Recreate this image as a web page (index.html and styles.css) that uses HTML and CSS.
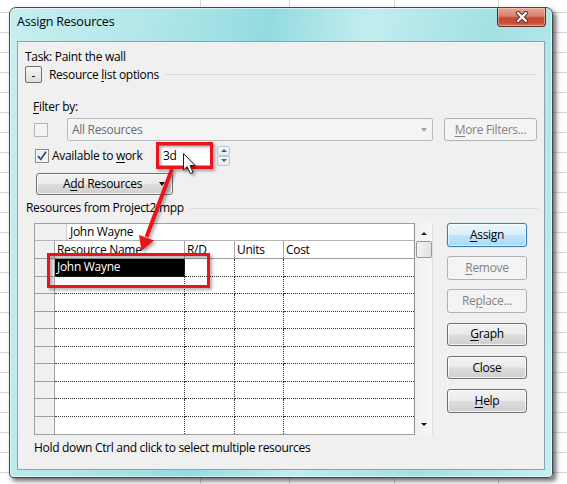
FILE: index.html
```html
<!DOCTYPE html>
<html>
<head>
<meta charset="utf-8">
<title>Assign Resources</title>
<link rel="stylesheet" href="styles.css">
</head>
<body>
<div class="window">
  <div class="titlebar">
    <span class="title">Assign Resources</span>
    <div class="close">
      <svg width="14" height="12" viewBox="0 0 14 12">
        <path d="M3 2 L11 10 M11 2 L3 10" stroke="#5a2a22" stroke-width="4.2" stroke-linecap="round"/>
        <path d="M3 2 L11 10 M11 2 L3 10" stroke="#ffffff" stroke-width="2.4" stroke-linecap="round"/>
      </svg>
    </div>
  </div>
  <div class="client">
    <div class="task">Task: Paint the wall</div>
    <div class="options-row">
      <span class="collapse"><span class="minus"></span></span>
      <span class="opt-label">Resource <u>l</u>ist options</span>
      <span class="rule"></span>
    </div>
    <div class="filter-label"><u>F</u>ilter by:</div>
    <div class="filter-row">
      <span class="check disabled"></span>
      <div class="combo"><span class="combo-text">All Resources</span><span class="combo-btn"><span class="tri-down gray"></span></span></div>
      <div class="btn disabled more"><span><u>M</u>ore Filters...</span></div>
    </div>
    <div class="avail-row">
      <span class="check"><svg width="12" height="12" viewBox="0 0 12 12"><path d="M2 6.2 L4.8 9.4 L10 1.8" fill="none" stroke="#344a85" stroke-width="1.8"/></svg></span>
      <span class="avail-label">Available to <u>w</u>ork</span>
      <div class="days">3d</div>
      <div class="spin"><span class="spin-btn"><span class="tri-up"></span></span><span class="spin-btn"><span class="tri-down"></span></span></div>
    </div>
    <div class="btn add"><span class="add-text">A<u>d</u>d Resources</span><span class="tri-down black"></span></div>
    <div class="section-row"><span>Resources from Project2.mpp</span><span class="rule"></span></div>
    <div class="main-row">
      <div class="grid-wrap">
        <div class="grid">
          <div class="entry-row"><span class="entry-gap"></span><span class="entry-field">John Wayne</span></div>
          <div class="cells">
            <div class="rh hdr"></div><div class="hc">Resource Name</div><div class="hc">R/D</div><div class="hc">Units</div><div class="hc last">Cost</div>
            <div class="rh"></div><div class="c sel">John Wayne</div><div class="c"></div><div class="c"></div><div class="c last"></div>
            <div class="rh"></div><div class="c"></div><div class="c"></div><div class="c"></div><div class="c last"></div>
            <div class="rh"></div><div class="c"></div><div class="c"></div><div class="c"></div><div class="c last"></div>
            <div class="rh"></div><div class="c"></div><div class="c"></div><div class="c"></div><div class="c last"></div>
            <div class="rh"></div><div class="c"></div><div class="c"></div><div class="c"></div><div class="c last"></div>
            <div class="rh"></div><div class="c"></div><div class="c"></div><div class="c"></div><div class="c last"></div>
            <div class="rh"></div><div class="c"></div><div class="c"></div><div class="c"></div><div class="c last"></div>
            <div class="rh"></div><div class="c"></div><div class="c"></div><div class="c"></div><div class="c last"></div>
            <div class="rh"></div><div class="c"></div><div class="c"></div><div class="c"></div><div class="c last"></div>
            <div class="rh end"></div><div class="c end"></div><div class="c end"></div><div class="c end"></div><div class="c last end"></div>
          </div>
        </div>
        <div class="vscroll">
          <span class="tri-up black small"></span>
          <span class="thumb"></span>
          <span class="track"></span>
          <span class="tri-down black small"></span>
        </div>
      </div>
      <div class="buttons">
        <div class="btn default"><span><u>A</u>ssign</span></div>
        <div class="btn disabled"><span><u>R</u>emove</span></div>
        <div class="btn disabled"><span>Re<u>p</u>lace...</span></div>
        <div class="btn"><span><u>G</u>raph</span></div>
        <div class="btn"><span>Close</span></div>
        <div class="btn"><span><u>H</u>elp</span></div>
      </div>
    </div>
    <div class="hint">Hold down Ctrl and click to select multiple resources</div>
  </div>
</div>
<svg class="annot" width="567" height="484" viewBox="0 0 567 484">
  <defs>
    <filter id="sh" x="-20%" y="-20%" width="140%" height="140%">
      <feDropShadow dx="2" dy="2" stdDeviation="1.6" flood-color="#000" flood-opacity="0.35"/>
    </filter>
  </defs>
  <g filter="url(#sh)">
    <rect x="157.5" y="143.5" width="54" height="24" fill="none" stroke="#e8141c" stroke-width="3"/>
    <rect x="48.5" y="254.5" width="160" height="32" fill="none" stroke="#e8141c" stroke-width="3"/>
    <line x1="172" y1="169" x2="146.5" y2="237" stroke="#e8141c" stroke-width="4"/>
    <polygon points="141.5,251 139,235 154,240.5" fill="#e8141c"/>
  </g>
  <g filter="url(#sh)">
    <path d="M183.5 153.5 L183.5 170 L187.2 166.5 L190.3 173.6 L193 172.4 L190 165.5 L195 165.5 Z" fill="#fff" stroke="#222" stroke-width="1" stroke-linejoin="round"/>
  </g>
</svg>
</body>
</html>
```

FILE: styles.css
```css
* { box-sizing: border-box; }
html, body { margin: 0; padding: 0; }
body {
  width: 567px;
  height: 484px;
  overflow: hidden;
  position: relative;
  font-family: "Open Sans", "Noto Sans", "DejaVu Sans", sans-serif;
  font-size: 12px;
  letter-spacing: -0.3px;
  color: #000;
  background-color: #fff;
  background-image:
    linear-gradient(to right, transparent 0 200px, #d6d6d6 200px 201px, transparent 201px 289px, #d6d6d6 289px 290px, transparent 290px 394px, #d6d6d6 394px 395px, transparent 395px 498px, #d6d6d6 498px 499px, transparent 499px),
    repeating-linear-gradient(to bottom, transparent 0 12px, #d6d6d6 12px 13px, transparent 13px 20px);
}
u { text-decoration: underline; text-underline-offset: 2px; }

.window {
  margin: 7px 0 0 9px;
  width: 544px;
  height: 471px;
  border: 1px solid #3f4b50;
  border-radius: 7px 7px 4px 4px;
  background: linear-gradient(100deg, #c8eef0 0%, #b3e7ea 22%, #93dbe0 42%, #c2edef 58%, #a2e0e4 78%, #c6eef0 100%);
  box-shadow: 3px 3px 5px rgba(0,0,0,0.6), inset 0 0 0 1px rgba(255,255,255,0.55);
  padding: 0 7px 7px 7px;
  display: flex;
  flex-direction: column;
}
.titlebar {
  height: 33px;
  display: flex;
  justify-content: space-between;
  align-items: flex-start;
  flex: none;
}
.title {
  margin-top: 6px;
  line-height: 16px;
  font-size: 12.5px;
  letter-spacing: -0.2px;
}
.close {
  width: 49px;
  height: 19px;
  margin-right: -1px;
  border: 1px solid #6b2b20;
  border-top: none;
  border-radius: 0 0 4px 4px;
  background: linear-gradient(#e6a796 0%, #d9806b 45%, #c54a31 55%, #c85038 85%, #d7765e 100%);
  box-shadow: inset 0 0 0 1px rgba(255,220,210,0.45);
  display: flex;
  align-items: center;
  justify-content: center;
}

.client {
  flex: 1;
  border: 1px solid #8aa2ab;
  background: #f0f0f0;
  padding: 7px 7px 0 7px;
  display: flex;
  flex-direction: column;
  align-items: flex-start;
}
.task { line-height: 16px; }
.options-row {
  margin-top: 1px;
  height: 17px;
  width: 100%;
  display: flex;
  align-items: center;
}
.collapse {
  width: 17px;
  height: 17px;
  border: 1px solid #707070;
  border-radius: 2px;
  background: linear-gradient(#f6f6f6, #dedede);
  position: relative;
  flex: none;
}
.minus {
  position: absolute;
  left: 6px;
  top: 9px;
  width: 3px;
  height: 1px;
  background: #222;
}
.opt-label { margin-left: 7px; line-height: 16px; }
.rule {
  flex: 1;
  height: 1px;
  background: #d3dde2;
  margin-left: 6px;
}
.filter-label {
  margin: 16px 0 0 8px;
  line-height: 16px;
}
.filter-row {
  margin-top: 3px;
  height: 23px;
  display: flex;
  align-items: center;
}
.check {
  width: 14px;
  height: 14px;
  border: 1px solid #8e8f8f;
  background: linear-gradient(135deg, #e8e8e8, #fbfbfb);
  box-shadow: inset 0 0 0 1px #f4f4f4;
  display: flex;
  align-items: center;
  justify-content: center;
  flex: none;
}
.check.disabled { border-color: #b5b5b5; background: #f4f4f4; }
.filter-row .check { margin-left: 9px; }
.combo {
  margin-left: 19px;
  width: 366px;
  height: 23px;
  border: 1px solid #b8bcbf;
  border-radius: 2px;
  background: #f4f4f4;
  display: flex;
  align-items: center;
}
.combo-text { flex: 1; color: #6d6d6d; padding-left: 4px; }
.combo-btn {
  width: 17px;
  height: 100%;
  display: flex;
  align-items: center;
  justify-content: center;
}
.tri-down, .tri-up {
  width: 0;
  height: 0;
  border-left: 3.5px solid transparent;
  border-right: 3.5px solid transparent;
  display: inline-block;
}
.tri-down { border-top: 4px solid #4a5d85; }
.tri-up { border-bottom: 4px solid #4a5d85; }
.tri-down.gray { border-top-color: #a2a2a2; }
.tri-down.black { border-top-color: #111; }
.tri-up.black { border-bottom-color: #222; }
.small { border-left-width: 3px; border-right-width: 3px; }
.tri-up.small { border-bottom-width: 3px; }
.tri-down.small { border-top-width: 3px; }

.btn {
  height: 23px;
  border: 1px solid #707070;
  border-radius: 3px;
  background: linear-gradient(#f2f2f2 0%, #ebebeb 48%, #dddddd 52%, #cfcfcf 100%);
  box-shadow: inset 0 0 0 1px rgba(255,255,255,0.75);
  display: flex;
  align-items: center;
  justify-content: center;
  line-height: 16px;
  color: #000;
  white-space: nowrap;
}
.btn.default {
  border-color: #3c7fb1;
  background: linear-gradient(#eaf6fd 0%, #d9f0fc 48%, #bee6fd 52%, #a7d9f5 100%);
  box-shadow: inset 0 0 0 1px rgba(255,255,255,0.6), 0 0 1px #48a6e0;
}
.btn.disabled {
  border-color: #adb2b5;
  background: #f4f4f4;
  color: #838383;
  box-shadow: none;
}
.more { margin-left: 11px; width: 93px; }

.avail-row {
  margin-top: 3px;
  height: 23px;
  display: flex;
  align-items: center;
}
.avail-row .check { margin-left: 10px; }
.avail-label { margin-left: 3px; width: 106px; line-height: 16px; white-space: nowrap; }
.days {
  width: 53px;
  height: 21px;
  background: #fff;
  border: 1px solid #abadb3;
  padding-left: 4px;
  line-height: 19px;
}
.spin {
  margin-left: 6px;
  width: 13px;
  height: 20px;
  display: flex;
  flex-direction: column;
  gap: 0;
}
.spin-btn {
  flex: 1;
  border: 1px solid #b9c9d8;
  border-radius: 2px;
  background: linear-gradient(#f6f9fb, #e4ebf1);
  display: flex;
  align-items: center;
  justify-content: center;
}
.spin-btn .tri-up, .spin-btn .tri-down { border-left-width: 3px; border-right-width: 3px; }
.spin-btn .tri-up { border-bottom-width: 3px; }
.spin-btn .tri-down { border-top-width: 3px; }

.add {
  margin: 6px 0 0 11px;
  width: 137px;
  height: 22px;
  justify-content: flex-start;
  padding-left: 26px;
}
.add .tri-down { margin-left: auto; margin-right: 7px; }

.section-row {
  margin: 5px 0 0 1px;
  width: 100%;
  display: flex;
  align-items: center;
  line-height: 16px;
  white-space: nowrap;
}
.section-row .rule { margin-left: 6px; }

.main-row {
  margin-top: 7px;
  display: flex;
  align-items: flex-start;
}
.grid-wrap {
  margin-left: 9px;
  display: flex;
  height: 212px;
}
.grid {
  width: 381px;
  height: 212px;
  border: 1px solid #a0a0a0;
  border-right: 1px solid #8f8f8f;
  background: #fff;
  display: flex;
  flex-direction: column;
}
.entry-row {
  height: 17px;
  display: flex;
  flex: none;
  border-bottom: 1px solid #b5b5b5;
}
.entry-gap {
  width: 32px;
  background: #f0f0f0;
  border-right: 1px solid #d0d0d0;
}
.entry-field {
  flex: 1;
  background: #fff;
  padding-left: 3px;
  line-height: 16px;
}
.cells {
  flex: 1;
  display: grid;
  grid-template-columns: 20px 130px 50px 49px 1fr;
  grid-template-rows: 18px repeat(10, 1fr);
}
.rh {
  background: #f0f0f0;
  border-right: 1px solid #a0a0a0;
  border-bottom: 1px solid #a0a0a0;
}
.rh.end { border-bottom: none; }
.hc {
  background: #fff;
  border-right: 1px solid #a8a8a8;
  border-bottom: 1px solid #a0a0a0;
  padding-left: 2px;
  line-height: 17px;
  white-space: nowrap;
  overflow: hidden;
}
.hc.last { border-right: none; }
.c {
  border-right: 1px dotted #303030;
  border-bottom: 1px dotted #303030;
  line-height: 16px;
  padding-left: 2px;
  white-space: nowrap;
}
.c.last { border-right: none; }
.c.end { border-bottom: none; }
.c.sel { background: #000; color: #fff; }

.vscroll {
  width: 18px;
  height: 212px;
  background: linear-gradient(to right, #f0f0f0, #f7f7f7);
  border-right: 1px solid #e2e2e2;
  display: flex;
  flex-direction: column;
  align-items: center;
}
.vscroll .tri-up { margin-top: 9px; }
.thumb {
  margin-top: 6px;
  width: 16px;
  height: 17px;
  border: 1px solid #979797;
  border-radius: 2px;
  background: linear-gradient(to right, #f3f3f3, #e2e2e2);
}
.track { flex: 1; }
.vscroll .tri-down { margin-bottom: 9px; }

.buttons {
  margin-left: 14px;
  width: 80px;
  display: flex;
  flex-direction: column;
  gap: 9.6px;
}
.buttons .btn { height: 23.6px; }

.hint {
  margin: 5px 0 0 9px;
  line-height: 16px;
}

.annot {
  position: absolute;
  left: 0;
  top: 0;
  pointer-events: none;
}
```
